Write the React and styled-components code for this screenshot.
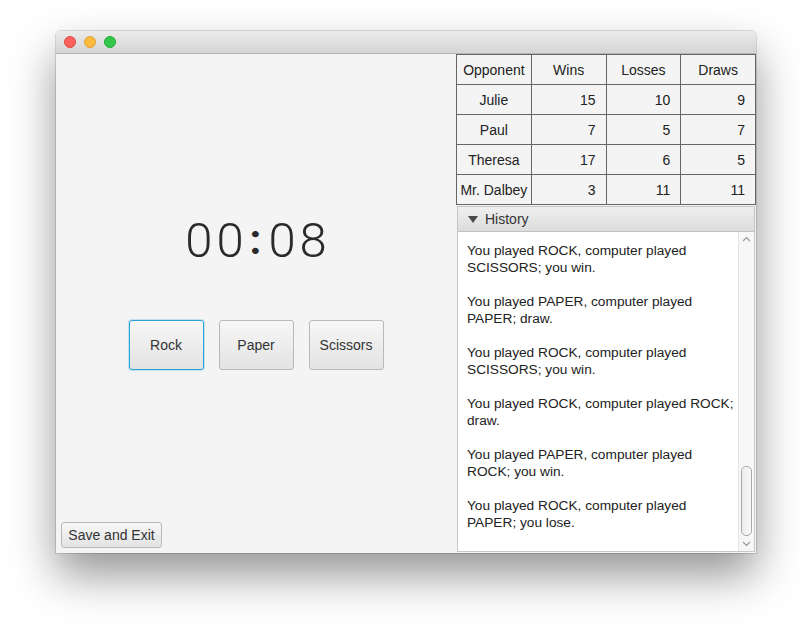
import React from "react";
import styled, { createGlobalStyle, css } from "styled-components";

const GlobalStyle = createGlobalStyle`
  html, body {
    margin: 0;
    padding: 0;
    background: #ffffff;
  }
  body {
    font-family: "Liberation Sans", Arial, sans-serif;
    color: #222;
  }
`;

const Page = styled.div`
  padding: 31px 0 0 56px;
  height: 634px;
  box-sizing: border-box;
`;

const Window = styled.div`
  width: 700px;
  height: 522px;
  border-radius: 5px 5px 0 0;
  overflow: hidden;
  display: flex;
  flex-direction: column;
  box-shadow: 0 22px 45px rgba(0, 0, 0, 0.42), 0 0 0 1px rgba(0, 0, 0, 0.13);
`;

const TitleBar = styled.div`
  height: 22px;
  flex: none;
  display: flex;
  align-items: center;
  gap: 8px;
  padding-left: 8px;
  background: linear-gradient(#ebebeb, #d5d5d5);
  border-bottom: 1px solid #b4b4b4;
`;

const Light = styled.span`
  width: 12px;
  height: 12px;
  border-radius: 50%;
  box-sizing: border-box;
  background: ${(p) => p.$color};
  border: 1px solid ${(p) => p.$edge};
`;

const Body = styled.div`
  flex: 1;
  display: flex;
  background: #f4f4f4;
  min-height: 0;
`;

const LeftPane = styled.div`
  width: 400px;
  display: flex;
  flex-direction: column;
  align-items: center;
`;

const Timer = styled.div`
  margin-top: 157px;
  padding-left: 4px;
  height: 60px;
  line-height: 60px;
  font-family: Roboto, "Liberation Sans", sans-serif;
  font-weight: 300;
  font-size: 49px;
  letter-spacing: 4px;
  color: #2a2a2a;
`;

const Colon = styled.span`
  font-weight: 700;
  font-size: 42px;
  margin: 0 3px 0 2px;
  position: relative;
  top: -3px;
`;

const ButtonRow = styled.div`
  display: flex;
  gap: 15px;
  margin-top: 49px;
`;

const buttonBase = css`
  box-sizing: border-box;
  font-family: "Liberation Sans", Arial, sans-serif;
  font-size: 14px;
  color: #333;
  border-radius: 3px;
  background: linear-gradient(#f7f7f7, #e3e3e3);
  border: 1px solid #b9b9b9;
  padding: 0;
`;

const ChoiceButton = styled.button`
  ${buttonBase}
  width: 75px;
  height: 50px;
  ${(p) =>
    p.$focused &&
    css`
      border-color: #2aa3d8;
      box-shadow: 0 0 0 1px rgba(42, 163, 216, 0.25);
    `}
`;

const ExitButton = styled.button`
  ${buttonBase}
  align-self: flex-start;
  margin: auto 0 5px 5px;
  width: 101px;
  height: 26px;
`;

const RightPane = styled.div`
  width: 300px;
  display: flex;
  flex-direction: column;
`;

const Table = styled.table`
  width: 300px;
  border-collapse: collapse;
  table-layout: fixed;
  font-size: 14px;
  color: #222;
`;

const Cell = styled.td`
  height: 29px;
  padding: ${(p) => (p.$right ? "0 10px 0 0" : "0")};
  border: 1px solid #666;
  text-align: ${(p) => (p.$right ? "right" : "center")};
`;

const HeadCell = styled.th`
  height: 29px;
  padding: 0;
  border: 1px solid #666;
  font-weight: normal;
  text-align: center;
`;

const Pane = styled.div`
  flex: 1;
  min-height: 0;
  display: flex;
  flex-direction: column;
  margin: 1px;
`;

const PaneHeader = styled.div`
  height: 26px;
  flex: none;
  box-sizing: border-box;
  display: flex;
  align-items: center;
  gap: 7px;
  padding-left: 10px;
  font-size: 14px;
  color: #333;
  background: linear-gradient(#efefef, #dcdcdc);
  border: 1px solid #c4c4c4;
`;

const Arrow = styled.span`
  width: 0;
  height: 0;
  border-left: 5px solid transparent;
  border-right: 5px solid transparent;
  border-top: 7px solid #4a4a4a;
`;

const TextArea = styled.div`
  flex: 1;
  min-height: 0;
  display: flex;
  background: #fff;
  border: 1px solid #c8c8c8;
  border-top: none;
`;

const Log = styled.div`
  flex: 1;
  overflow: hidden;
  padding: 10px 4px 0 9px;
  font-size: 13.7px;
  line-height: 17px;
  color: #222;
`;

const Entry = styled.p`
  margin: 0 0 17px 0;
`;

const ScrollBar = styled.div`
  width: 15px;
  flex: none;
  display: flex;
  flex-direction: column;
  align-items: center;
  background: #f7f7f7;
  border-left: 1px solid #e4e4e4;
`;

const Chevron = styled.svg`
  flex: none;
  margin: ${(p) => p.$m};
`;

const Track = styled.div`
  flex: 1;
  width: 100%;
  display: flex;
  flex-direction: column;
  justify-content: flex-end;
  align-items: center;
`;

const Thumb = styled.div`
  width: 11px;
  height: 70px;
  box-sizing: border-box;
  border: 1px solid #a9a9a9;
  border-radius: 5px;
  background: linear-gradient(90deg, #ececec, #f8f8f8);
`;

const stats = [
  ["Julie", 15, 10, 9],
  ["Paul", 7, 5, 7],
  ["Theresa", 17, 6, 5],
  ["Mr. Dalbey", 3, 11, 11],
];

const history = [
  "You played ROCK, computer played SCISSORS; you win.",
  "You played PAPER, computer played PAPER; draw.",
  "You played ROCK, computer played SCISSORS; you win.",
  "You played ROCK, computer played ROCK; draw.",
  "You played PAPER, computer played ROCK; you win.",
  "You played ROCK, computer played PAPER; you lose.",
];

export default function App() {
  return (
    <>
      <GlobalStyle />
      <Page>
        <Window>
          <TitleBar>
            <Light $color="#fc605c" $edge="#de4a45" />
            <Light $color="#fdbc40" $edge="#dea236" />
            <Light $color="#34c84a" $edge="#27a83a" />
          </TitleBar>
          <Body>
            <LeftPane>
              <Timer>
                00<Colon>:</Colon>08
              </Timer>
              <ButtonRow>
                <ChoiceButton $focused>Rock</ChoiceButton>
                <ChoiceButton>Paper</ChoiceButton>
                <ChoiceButton>Scissors</ChoiceButton>
              </ButtonRow>
              <ExitButton>Save and Exit</ExitButton>
            </LeftPane>
            <RightPane>
              <Table>
                <thead>
                  <tr>
                    <HeadCell>Opponent</HeadCell>
                    <HeadCell>Wins</HeadCell>
                    <HeadCell>Losses</HeadCell>
                    <HeadCell>Draws</HeadCell>
                  </tr>
                </thead>
                <tbody>
                  {stats.map(([name, w, l, d]) => (
                    <tr key={name}>
                      <Cell>{name}</Cell>
                      <Cell $right>{w}</Cell>
                      <Cell $right>{l}</Cell>
                      <Cell $right>{d}</Cell>
                    </tr>
                  ))}
                </tbody>
              </Table>
              <Pane>
                <PaneHeader>
                  <Arrow />
                  History
                </PaneHeader>
                <TextArea>
                  <Log>
                    {history.map((h, i) => (
                      <Entry key={i}>{h}</Entry>
                    ))}
                  </Log>
                  <ScrollBar>
                    <Chevron $m="4px 0 0" width="9" height="6" viewBox="0 0 9 6">
                      <path d="M1 5 L4.5 1.5 L8 5" fill="none" stroke="#9a9a9a" strokeWidth="1.2" />
                    </Chevron>
                    <Track>
                      <Thumb />
                    </Track>
                    <Chevron $m="5px 0 4px" width="9" height="6" viewBox="0 0 9 6">
                      <path d="M1 1 L4.5 4.5 L8 1" fill="none" stroke="#9a9a9a" strokeWidth="1.2" />
                    </Chevron>
                  </ScrollBar>
                </TextArea>
              </Pane>
            </RightPane>
          </Body>
        </Window>
      </Page>
    </>
  );
}
